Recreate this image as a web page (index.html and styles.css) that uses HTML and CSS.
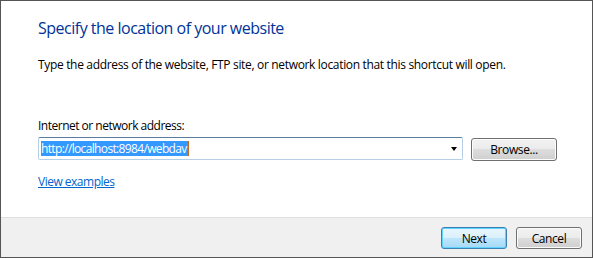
FILE: index.html
```html
<!DOCTYPE html>
<html>
<head>
<meta charset="utf-8">
<link rel="stylesheet" href="styles.css">
</head>
<body>
<div class="window">
  <div class="content">
    <h1 class="title">Specify the location of your website</h1>
    <p class="desc">Type the address of the website, FTP site, or network location that this shortcut will open.</p>
    <div class="label">Internet or network address:</div>
    <div class="row">
      <div class="combo">
        <span class="value"><span class="sel">http://localhost:8984/webdav</span><span class="caret"></span></span>
        <span class="arrow"></span>
      </div>
      <button class="btn browse">Browse...</button>
    </div>
    <a class="link" href="#">View examples</a>
  </div>
  <div class="footer">
    <button class="btn default">Next</button>
    <button class="btn">Cancel</button>
  </div>
</div>
</body>
</html>
```
FILE: styles.css
```css
html, body {
  margin: 0;
  padding: 0;
  background: #ffffff;
}
body {
  font-family: "Segoe UI", "Open Sans", sans-serif;
  font-size: 12px;
  color: #000;
}
.window {
  width: 593px;
  height: 258px;
  box-sizing: border-box;
  border: 1px solid #555555;
  display: flex;
  flex-direction: column;
}
.content {
  flex: 1;
  background: #ffffff;
  padding: 17px 0 0 37px;
  display: flex;
  flex-direction: column;
  align-items: flex-start;
}
.title {
  margin: 0;
  font-size: 16px;
  line-height: 21px;
  font-weight: normal;
  color: #003399;
  letter-spacing: -0.5px;
}
.desc {
  margin: 18px 0 0 0;
  line-height: 15px;
  letter-spacing: -0.33px;
}
.label {
  margin-top: 46px;
  line-height: 15px;
  letter-spacing: -0.5px;
}
.row {
  margin-top: 4px;
  display: flex;
  align-items: flex-start;
  gap: 8px;
}
.combo {
  width: 425px;
  height: 23px;
  box-sizing: border-box;
  border: 1px solid #b5cfe7;
  border-top-color: #5c7d9e;
  border-radius: 2px;
  display: flex;
  align-items: center;
  padding: 0 5px 0 2px;
  background: #fff;
}
.value {
  flex: 1;
  display: flex;
  align-items: center;
}
.sel {
  display: inline-block;
  background: #3399ff;
  color: #fff;
  line-height: 15px;
  letter-spacing: -0.65px;
  padding-right: 1px;
}
.caret {
  display: inline-block;
  width: 1px;
  height: 15px;
  background: #c26a1b;
}
.arrow {
  width: 0;
  height: 0;
  border-left: 3.5px solid transparent;
  border-right: 3.5px solid transparent;
  border-top: 4px solid #000;
}
.btn {
  font-family: "Segoe UI", "Open Sans", sans-serif;
  font-size: 12px;
  letter-spacing: -0.4px;
  color: #000;
  height: 22px;
  width: 66px;
  padding: 0;
  border: 1px solid #707070;
  border-radius: 3px;
  background: linear-gradient(#f2f2f2 0%, #ebebeb 50%, #dddddd 50%, #cfcfcf 100%);
  box-shadow: inset 0 0 0 1px #fcfcfc;
}
.browse {
  width: 86px;
  height: 23px;
  margin-top: 1px;
}
.default {
  border-color: #3c7fb1;
  background: linear-gradient(#eaf6fd 0%, #d9f0fc 50%, #bee6fd 50%, #a7d9f5 100%);
  box-shadow: inset 0 0 0 1px #5fd3ff;
}
.link {
  margin-top: 13px;
  line-height: 15px;
  color: #0066cc;
  text-decoration: underline;
  letter-spacing: -0.5px;
}
.footer {
  height: 30px;
  border-top: 1px solid #dfdfdf;
  background: #f0f0f0;
  display: flex;
  justify-content: flex-end;
  align-items: flex-start;
  padding: 9px 10px 0 0;
  gap: 9px;
}
```
